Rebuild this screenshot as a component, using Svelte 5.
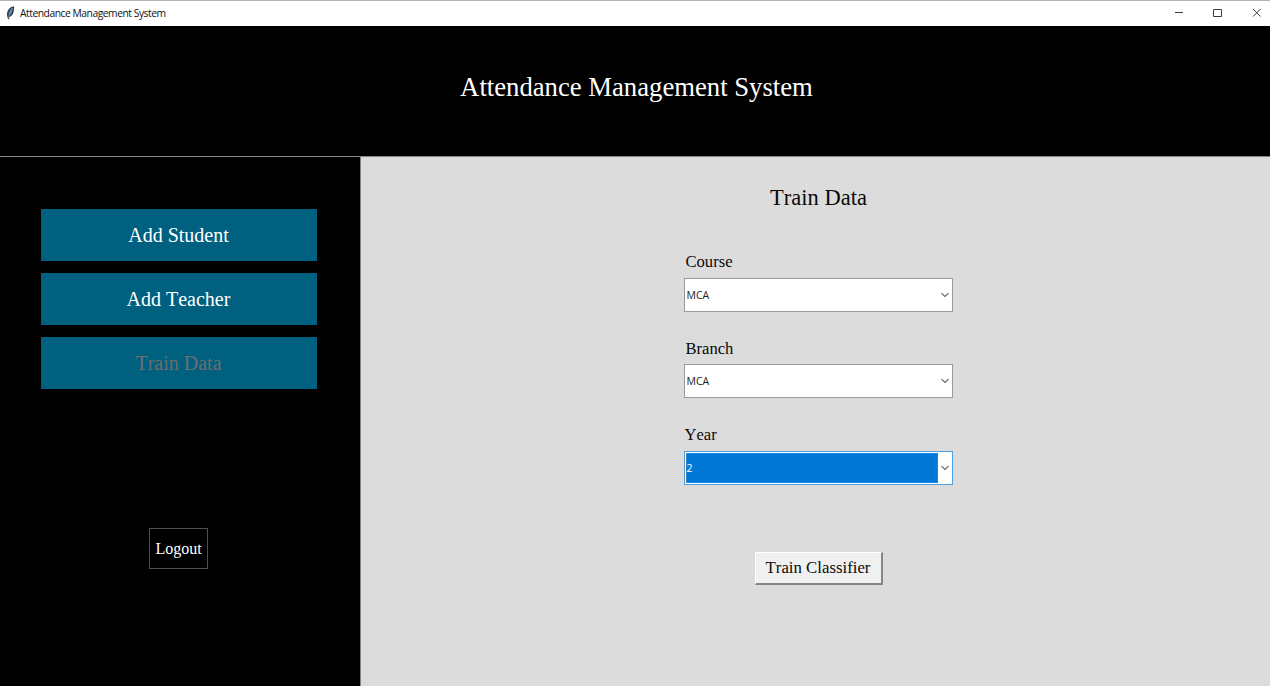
<script>
  const menu = [
    { label: 'Add Student', active: false },
    { label: 'Add Teacher', active: false },
    { label: 'Train Data', active: true }
  ];
  const fields = [
    { label: 'Course', value: 'MCA', focused: false },
    { label: 'Branch', value: 'MCA', focused: false },
    { label: 'Year', value: '2', focused: true }
  ];
</script>

<div class="window">
  <div class="titlebar">
    <svg class="feather" width="9" height="14" viewBox="0 0 9 14">
      <path d="M7.800.2C5.200.4 2.300 2.800 1.300 6c-.5 1.800-.5 3.500.2 5.200l.6 2.100 1.200-.1-.2-2.100C5.200 10.500 7 8.500 7.500 6.200 7.900 4.300 8.600 2 7.800.2z" fill="#35404c" />
      <path d="M6.900 1.600C4.500 3 2.900 5.500 2.500 9.600c2-.8 3.200-2.400 3.700-4.400.3-1.300.7-2.200.7-3.600z" fill="#4681b5" />
      <path d="M6.500 2C4.500 4.500 3 8 2.600 12.500" fill="none" stroke="#b8c5d1" stroke-width=".4" />
    </svg>
    <span class="caption">Attendance Management System</span>
    <svg class="controls" width="90" height="12" viewBox="0 0 90 12" fill="none" stroke="#3c3c3c">
      <path d="M1 5.500h8M39.500 2.500h8v7h-8zM79 2l7.500 7.500M86.500 2L79 9.500" />
    </svg>
  </div>
  <header><h1>Attendance Management System</h1></header>
  <div class="body">
    <nav>
      {#each menu as item}
        <button class="item" class:active={item.active}>{item.label}</button>
      {/each}
      <button class="logout">Logout</button>
    </nav>
    <main>
      <h2>Train Data</h2>
      {#each fields as f}
        <div class="field">
          <div class="label" class:year={f.focused}>{f.label}</div>
          <div class="combo" class:focused={f.focused}>
            <span class="value">{f.value}</span>
            <svg width="14" height="8" viewBox="0 0 14 8" fill="none" stroke="#606060" stroke-width="1.100">
              <path d="M3.500 2.200L7 5.500l3.500-3.300" />
            </svg>
          </div>
        </div>
      {/each}
      <button class="train">Train Classifier</button>
    </main>
  </div>
</div>

<style>
  :global(body) { background: #000; overflow: hidden; }
  .window {
    width: 1270px; height: 686px; display: flex; flex-direction: column;
    font-family: "Liberation Serif", "Times New Roman", serif;
    box-sizing: border-box; font-variant-ligatures: none; font-kerning: none;
  }
  .window * { box-sizing: border-box; }
  button {
    font-family: inherit; padding: 0; margin: 0; border-radius: 0;
    font-variant-ligatures: none; font-kerning: none;
  }
  .titlebar {
    height: 26px; flex: none; background: #fff; border-top: 1px solid #b4b4b4;
    display: flex; align-items: center; padding: 0 8px 1px 6px;
  }
  .feather { margin-right: 5px; }
  .caption {
    font: 10.300px/22px "Open Sans", "Noto Sans", sans-serif; color: #111;
    letter-spacing: -0.470px; white-space: nowrap; flex: 1; padding-bottom: 1px;
  }
  .controls { display: block; margin-right: -2px; }
  header {
    height: 131px; flex: none; background: #000; border-bottom: 1px solid #858585;
    display: flex; justify-content: center; padding: 45px 0 0 3px;
  }
  h1 { margin: 0; color: #fff; font-weight: 400; font-size: 26.700px; line-height: 32px; }
  .body { flex: 1; display: flex; min-height: 0; }
  nav {
    width: 361px; background: #000; border-right: 1px solid #858585;
    display: flex; flex-direction: column; align-items: center; padding: 52px 3px 0 0;
  }
  .item {
    width: 276px; height: 52px; margin-bottom: 12px; border: 0;
    background: #006080; color: #fff; font-size: 20px; line-height: 51px;
  }
  .item.active { color: #6d6d6d; }
  .logout {
    width: 59px; height: 41px; margin-top: 127px; border: 1px solid #505050;
    background: #000; color: #fff; font-size: 16px;
  }
  main {
    flex: 1; background: #dcdcdc; display: flex; flex-direction: column;
    align-items: center; padding: 26px 0 0 6px;
  }
  h2 { margin: 0 0 38px; font-weight: 400; font-size: 22.500px; line-height: 30px; color: #0a0a0a; }
  .field { width: 269px; height: 86.700px; flex: none; }
  .label { height: 26.500px; padding-left: 1.500px; font-size: 16.600px; line-height: 22px; color: #0a0a0a; }
  .label.year { padding-left: 0.500px; }
  .combo {
    height: 34px; border: 1px solid #999; background: #fff;
    display: flex; align-items: center; padding: 1px 0 1px 1px;
  }
  .value {
    width: 252px; height: 30px; padding-left: 0.500px;
    font: 10.500px/31px "Open Sans", "Noto Sans", sans-serif; color: #222;
  }
  .combo.focused { border-color: #4a9fe3; }
  .focused .value { background: #0078d7; color: #fff; outline: 1px dotted #8a8178; outline-offset: -1px; }
  .train {
    width: 128px; height: 33px; margin-top: 41px; flex: none;
    background: #f0f0f0; color: #0a0a0a; font-size: 16.800px;
    border: solid; border-width: 1px 2px 2px 1px; border-color: #fff #858585 #858585 #fff;
  }
</style>
